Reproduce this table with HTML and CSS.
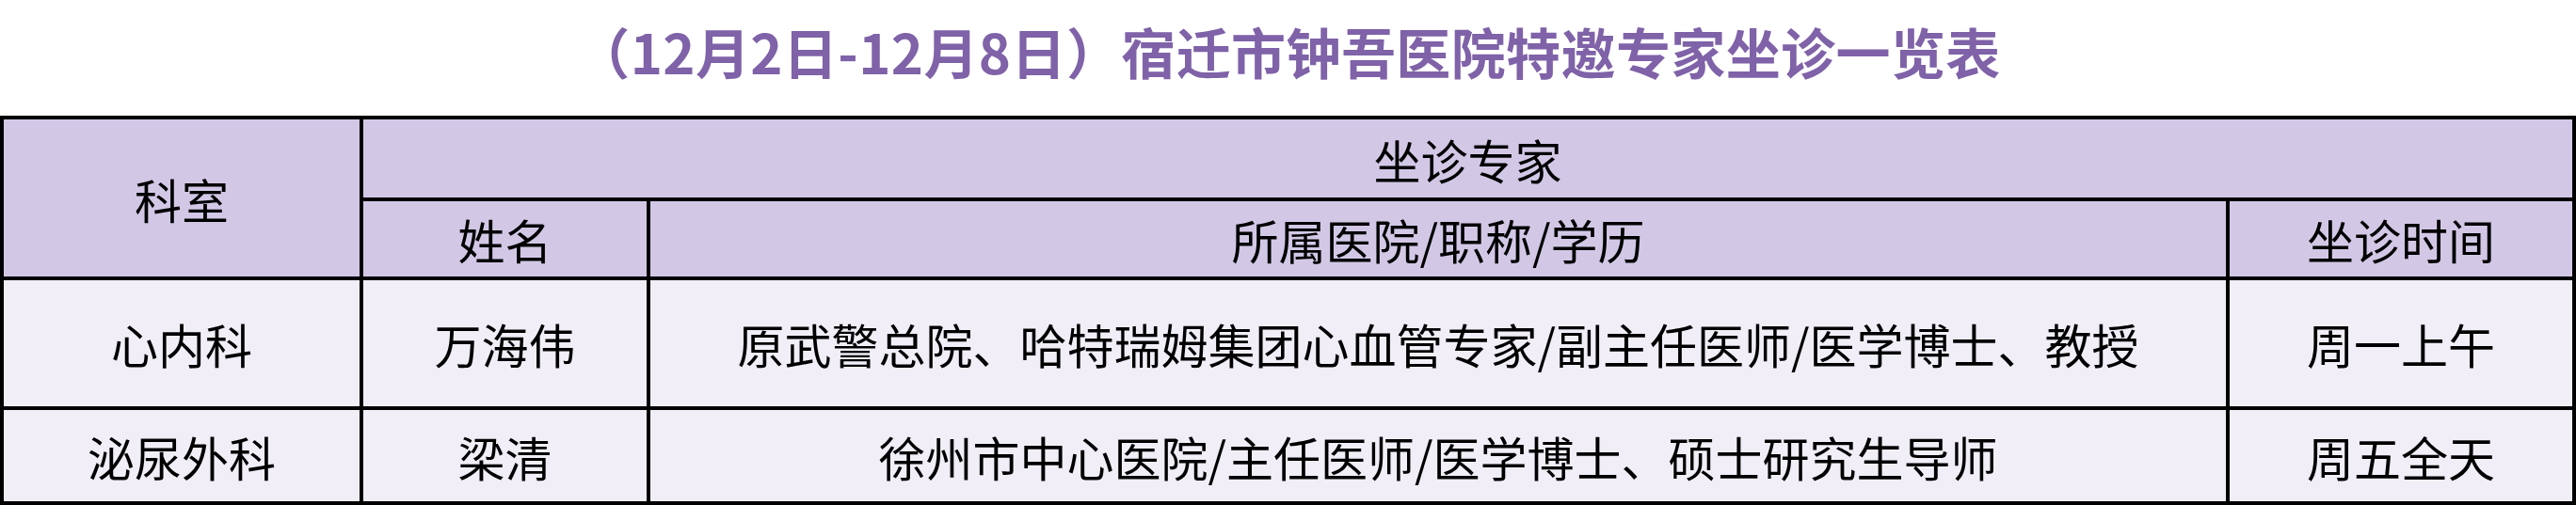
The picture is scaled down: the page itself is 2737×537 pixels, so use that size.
FILE: index.html
```html
<!DOCTYPE html>
<html lang="zh-CN">
<head>
<meta charset="utf-8">
<title>坐诊一览表</title>
<link rel="stylesheet" href="styles.css">
</head>
<body>
<div class="page">
  <h1 class="title">（12月2日-12月8日）宿迁市钟吾医院特邀专家坐诊一览表</h1>
  <div class="grid">
    <div class="cell head dept">科室</div>
    <div class="cell head group">坐诊专家</div>
    <div class="cell head">姓名</div>
    <div class="cell head">所属医院/职称/学历</div>
    <div class="cell head">坐诊时间</div>

    <div class="cell body">心内科</div>
    <div class="cell body">万海伟</div>
    <div class="cell body">原武警总院、哈特瑞姆集团心血管专家/副主任医师/医学博士、教授</div>
    <div class="cell body">周一上午</div>

    <div class="cell body">泌尿外科</div>
    <div class="cell body">梁清</div>
    <div class="cell body">徐州市中心医院/主任医师/医学博士、硕士研究生导师</div>
    <div class="cell body">周五全天</div>
  </div>
</div>
</body>
</html>
```

FILE: styles.css
```css
html, body {
  margin: 0;
  padding: 0;
  background: #ffffff;
}

.page {
  width: 2737px;
  height: 537px;
  display: flex;
  flex-direction: column;
  font-family: "Noto Sans CJK SC", "Noto Sans", sans-serif;
}

.title {
  margin: 0;
  height: 123px;
  box-sizing: border-box;
  padding-top: 25px;
  font-size: 58px;
  line-height: 58px;
  font-weight: 700;
  letter-spacing: 0.4px;
  color: #7f62a8;
  text-align: center;
  white-space: nowrap;
}

.grid {
  display: grid;
  grid-template-columns: 378px 301px 1674px 364px;
  grid-template-rows: 83px 80px 134px 97px;
  gap: 4px;
  padding: 4px;
  background: #000000;
}

.cell {
  display: flex;
  align-items: center;
  justify-content: center;
  font-size: 50px;
  line-height: 1;
  color: #000000;
  white-space: nowrap;
}

.head {
  background: #d2c8e6;
}

.body {
  background: #f1eef8;
}

.dept {
  grid-row: 1 / span 2;
}

.group {
  grid-column: 2 / span 3;
}
```
